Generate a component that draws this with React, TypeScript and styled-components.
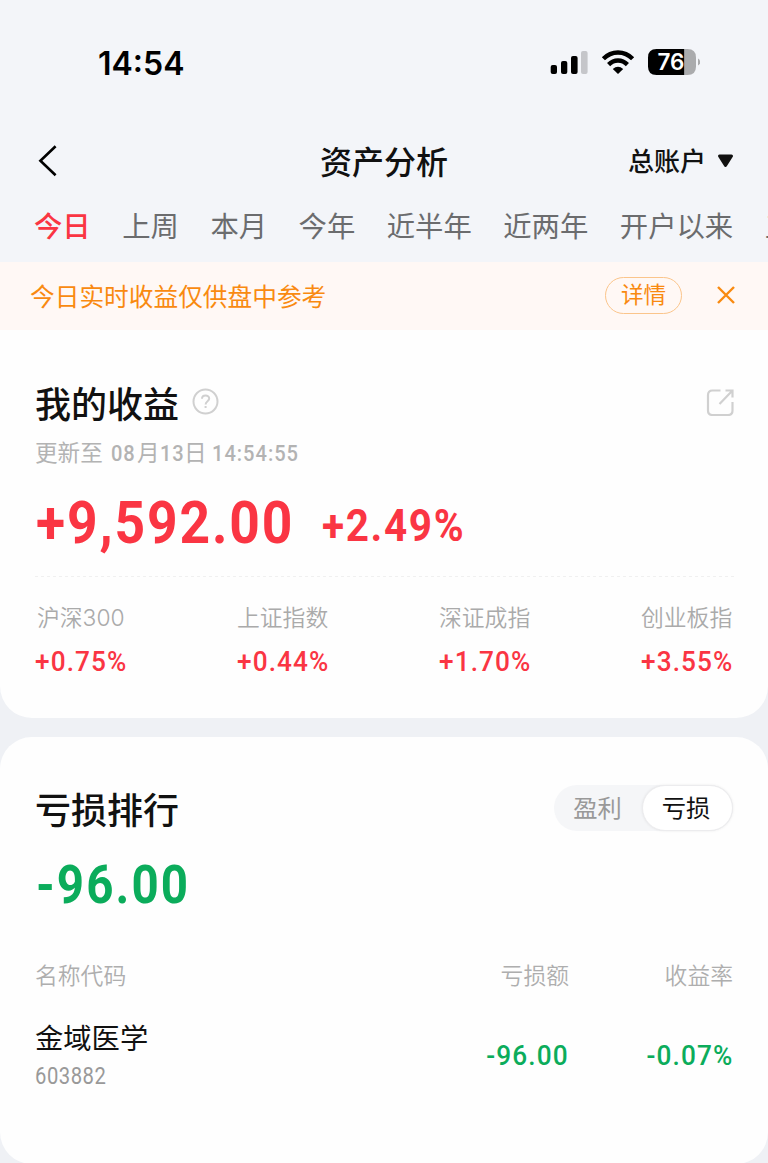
import React from "react";
import styled, { createGlobalStyle } from "styled-components";

const CJK = `"Noto Sans CJK SC", sans-serif`;

const Global = createGlobalStyle`
  * { box-sizing: border-box; }
  body { margin: 0; background: #f3f5f9; font-family: ${CJK}; color: #111; }
`;

const Page = styled.main`
  width: 768px;
  height: 1163px;
  overflow: hidden;
  background: #f3f5f9;
`;

const StatusBar = styled.header`
  height: 124px;
  padding: 44px 68px 0 98px;
  display: flex;
  justify-content: space-between;
  align-items: flex-start;
`;

const Time = styled.span`
  font: 600 32px/39px Inter, sans-serif;
  color: #000;
`;

const StatusIcons = styled.svg`
  width: 150px;
  height: 28px;
  margin-top: 4px;
`;

const NavBar = styled.nav`
  height: 74px;
  padding: 0 34px;
  display: grid;
  grid-template-columns: 1fr auto 1fr;
  align-items: center;
`;

const BackIcon = styled.svg`
  width: 20px;
  height: 32px;
  margin-left: 4px;
`;

const PageTitle = styled.h1`
  margin: 0;
  padding-bottom: 3px;
  font-size: 32px;
  line-height: 40px;
  font-weight: 500;
`;

const Account = styled.button`
  justify-self: end;
  display: flex;
  align-items: center;
  gap: 11px;
  padding: 0;
  border: 0;
  background: none;
  color: #111;
  font: 500 26px/32px ${CJK};
`;

const AccountName = styled.span`
  padding-bottom: 2px;
`;

const Tabs = styled.div`
  height: 64px;
  padding: 8px 0 0 34px;
  display: flex;
  gap: 31.5px;
  overflow: hidden;
`;

const Tab = styled.span<{ $active?: boolean }>`
  flex: none;
  font-size: 28.35px;
  line-height: 38px;
  font-weight: ${(p) => (p.$active ? 500 : 400)};
  color: ${(p) => (p.$active ? "#fa3543" : "#6b6c6e")};
`;

const Notice = styled.div`
  height: 68px;
  padding: 0 33px 2px 30px;
  display: flex;
  align-items: center;
  background: #fff8f5;
  color: #f98a10;
`;

const NoticeText = styled.span`
  flex: 1;
  padding-bottom: 1px;
  font-size: 24.7px;
  line-height: 36px;
`;

const DetailButton = styled.button`
  width: 77px;
  height: 37px;
  margin-right: 35px;
  padding: 0 0 2px;
  border: 1px solid #fbc58b;
  border-radius: 19px;
  background: none;
  color: #f98a10;
  font: 400 22.6px/32px ${CJK};
`;

const Cards = styled.div`
  display: flex;
  flex-direction: column;
  gap: 19px;
  background: #eff1f5;
`;

const ProfitCard = styled.section`
  height: 388px;
  padding: 47px 34px 0 35px;
  border-radius: 0 0 32px 32px;
  background: #fefefe;
`;

const LossCard = styled.section`
  height: 427px;
  padding: 46px 35px 0;
  border-radius: 32px;
  background: #fefefe;
`;

const HeadRow = styled.div`
  height: 50px;
  display: flex;
  align-items: center;
  justify-content: space-between;
`;

const HeadGroup = styled.div`
  display: flex;
  align-items: center;
  gap: 13px;
`;

const CardTitle = styled.h2`
  margin: 0;
  font-size: 36px;
  line-height: 48px;
  font-weight: 500;
`;

const HintIcon = styled.svg`
  width: 27px;
  height: 27px;
  margin-bottom: 1px;
`;

const Num = styled.span<{ $size: number; $weight?: number; $scale?: number; $track?: number; $end?: boolean }>`
  display: inline-block;
  white-space: nowrap;
  font-family: Roboto, sans-serif;
  font-size: ${(p) => p.$size}px;
  font-weight: ${(p) => p.$weight ?? 500};
  letter-spacing: ${(p) => p.$track ?? 0}px;
  margin-right: ${(p) => (p.$end ? -(p.$track ?? 0) : 0)}px;
  transform: scaleX(${(p) => p.$scale ?? 1});
  transform-origin: ${(p) => (p.$end ? "right" : "left")} center;
`;

const Updated = styled.div`
  height: 34px;
  margin-top: 8px;
  display: flex;
  font-size: 22.6px;
  line-height: 34px;
  color: #b3b3b3;
`;

const DatePart = styled.span<{ $width: number; $before?: number }>`
  flex: none;
  width: ${(p) => p.$width}px;
  margin-left: ${(p) => p.$before ?? 0}px;
`;

const Totals = styled.div`
  height: 107px;
  display: flex;
  align-items: flex-start;
  color: #fa3543;
`;

const TotalValue = styled.div`
  width: 287px;
  padding: 5px 0 0 1px;
  line-height: 98px;
`;

const TotalRate = styled.div`
  padding-top: 8px;
  line-height: 98px;
`;

const Divider = styled.div`
  height: 1px;
  background: repeating-linear-gradient(90deg, #f0f0f0 0 3px, transparent 3px 6px);
`;

const Indices = styled.div`
  display: flex;
  justify-content: space-between;
  padding-top: 24px;
`;

const IndexItem = styled.div`
  width: 93px;
  color: #fa3543;
`;

const IndexName = styled.div<{ $indent?: boolean }>`
  height: 34px;
  padding-left: ${(p) => (p.$indent ? 2 : 0)}px;
  font-family: Inter, ${CJK};
  font-weight: 350;
  font-size: 22.8px;
  line-height: 34px;
  color: #aaa;
  white-space: nowrap;
`;

const IndexValue = styled.div`
  margin-top: 8px;
  line-height: 37px;
`;

const Segment = styled.div`
  width: 179px;
  height: 46px;
  margin-bottom: 1px;
  display: flex;
  border-radius: 23px;
  background: #f5f6f8;
`;

const SegmentItem = styled.button<{ $on?: boolean }>`
  width: ${(p) => (p.$on ? 91 : 88)}px;
  padding: 0 ${(p) => (p.$on ? 3 : 1)}px 2px 0;
  border: ${(p) => (p.$on ? "1px solid #ececee" : "0")};
  border-radius: 23px;
  background: ${(p) => (p.$on ? "#fff" : "none")};
  box-shadow: ${(p) => (p.$on ? "0 0 3px rgba(0,0,0,.08)" : "none")};
  color: ${(p) => (p.$on ? "#111" : "#999")};
  font: 400 24.3px/40px ${CJK};
`;

const LossTotal = styled.div`
  height: 101px;
  padding-left: 1px;
  line-height: 103px;
  color: #0bac5b;
`;

const Table = styled.div`
  display: grid;
  grid-template-columns: 1fr 200px 164px;
`;

const HeadCell = styled.div<{ $end?: boolean }>`
  padding-top: 24px;
  height: 85px;
  font-size: 22.8px;
  line-height: 34px;
  font-weight: 350;
  color: #aeaeae;
  text-align: ${(p) => (p.$end ? "right" : "left")};
`;

const StockName = styled.div`
  font-size: 28.3px;
  line-height: 36px;
`;

const StockCode = styled.div`
  margin-top: 4px;
  line-height: 36px;
  color: #999;
`;

const ValueCell = styled.div`
  padding: 18px 1px 0 0;
  line-height: 38px;
  text-align: right;
  color: #0bac5b;
`;

const tabs = ["今日", "上周", "本月", "今年", "近半年", "近两年", "开户以来", "五年"];

const indices = [
  { name: "沪深300", value: "+0.75%" },
  { name: "上证指数", value: "+0.44%" },
  { name: "深证成指", value: "+1.70%" },
  { name: "创业板指", value: "+3.55%" },
];

const Status = () => (
  <StatusIcons viewBox="550 48 150 28">
    <rect x="550.7" y="65" width="6.3" height="9" rx="2" />
    <rect x="561" y="61" width="6.3" height="13" rx="2" />
    <rect x="571" y="56" width="6.6" height="18" rx="2" />
    <rect x="581" y="51" width="6.6" height="23" rx="2" fill="#c5c6ca" />
    <g fill="none" stroke="#000" strokeWidth="4.4">
      <path d="M603.4 58.8C611.5 50.4 624.5 50.4 632.6 58.8" />
      <path d="M608.6 64.6C614 59.2 622 59.2 627.4 64.6" />
    </g>
    <path d="M612.8 69Q618 64.4 623.2 69L618 74Z" />
    <path d="M656.5 49H684.5V75H656.5Q648 75 648 66.5V57.5Q648 49 656.5 49Z" />
    <path d="M684.5 49H687.5Q696 49 696 57.5V66.5Q696 75 687.5 75H684.5Z" fill="#aaabad" />
    <path d="M698 58.5Q700.2 60 700.2 62T698 65.5Z" fill="#aaabad" />
    <text x="657.5" y="70.3" fill="#fff" fontFamily="Inter" fontWeight="600" fontSize="22.5" letterSpacing="-0.1">76</text>
  </StatusIcons>
);

export default function App() {
  return (
    <Page>
      <Global />
      <StatusBar>
        <Time>14:54</Time>
        <Status />
      </StatusBar>
      <NavBar>
        <BackIcon viewBox="0 0 20 32" fill="none" stroke="#000" strokeWidth="2.6">
          <path d="M17.6 1.2L2.4 15.7L17.6 30.2" />
        </BackIcon>
        <PageTitle>资产分析</PageTitle>
        <Account>
          <AccountName>总账户</AccountName>
          <svg width="17" height="14" viewBox="0 0 17 14">
            <path d="M2.5 2H14.5L8.5 11.5Z" fill="#111" stroke="#111" strokeWidth="3" strokeLinejoin="round" />
          </svg>
        </Account>
      </NavBar>
      <Tabs>
        {tabs.map((t, i) => (
          <Tab key={t} $active={i === 0}>{t}</Tab>
        ))}
      </Tabs>
      <Notice>
        <NoticeText>今日实时收益仅供盘中参考</NoticeText>
        <DetailButton>详情</DetailButton>
        <svg width="18" height="18" viewBox="0 0 18 18" fill="none" stroke="#f98a10" strokeWidth="2.4">
          <path d="M1 1L17 17M17 1L1 17" />
        </svg>
      </Notice>
      <Cards>
        <ProfitCard>
          <HeadRow>
            <HeadGroup>
              <CardTitle>我的收益</CardTitle>
              <HintIcon viewBox="0 0 27 27" fill="none" stroke="#d0d0d0" strokeWidth="2">
                <circle cx="13.5" cy="13.5" r="12" />
                <path d="M10 10.8C10 6.4 17.2 6.4 17.2 10.6C17.2 13.2 13.6 13.2 13.6 16.4M13.6 18V20" />
              </HintIcon>
            </HeadGroup>
            <svg width="28" height="28" viewBox="0 0 28 28" fill="none" stroke="#d0d0d0" strokeWidth="2.2">
              <path d="M14.5 2.5H6.500Q2 2.5 2 7V22.5Q2 27 6.500 27H22Q26.500 27 26.500 22.5V14M19.500 2.5H26.500V9.500M26.500 2.5L13.500 16" />
            </svg>
          </HeadRow>
          <Updated>
            <DatePart $width={68}>更新至</DatePart>
            <DatePart $width={26} $before={8}><Num $size={22.6} $scale={0.89} $track={1}>08</Num></DatePart>
            <DatePart $width={23}>月</DatePart>
            <DatePart $width={24}><Num $size={22.6} $scale={0.89} $track={1}>13</Num></DatePart>
            <DatePart $width={22}>日</DatePart>
            <DatePart $width={90} $before={6}><Num $size={22.6} $scale={0.89} $track={1.1}>14:54:55</Num></DatePart>
          </Updated>
          <Totals>
            <TotalValue><Num $size={60} $weight={700} $scale={0.89} $track={2.1}>+9,592.00</Num></TotalValue>
            <TotalRate><Num $size={44} $weight={700} $scale={0.92} $track={1.8}>+2.49%</Num></TotalRate>
          </Totals>
          <Divider />
          <Indices>
            {indices.map((it, i) => (
              <IndexItem key={it.name}>
                <IndexName $indent={i === 0}>{it.name}</IndexName>
                <IndexValue><Num $size={28.2} $scale={0.93} $track={1.2}>{it.value}</Num></IndexValue>
              </IndexItem>
            ))}
          </Indices>
        </ProfitCard>
        <LossCard>
          <HeadRow>
            <CardTitle>亏损排行</CardTitle>
            <Segment>
              <SegmentItem>盈利</SegmentItem>
              <SegmentItem $on>亏损</SegmentItem>
            </Segment>
          </HeadRow>
          <LossTotal><Num $size={54} $weight={700} $scale={0.88} $track={2.4}>-96.00</Num></LossTotal>
          <Table>
            <HeadCell>名称代码</HeadCell>
            <HeadCell $end>亏损额</HeadCell>
            <HeadCell $end>收益率</HeadCell>
            <div>
              <StockName>金域医学</StockName>
              <StockCode><Num $size={23} $weight={450} $scale={0.88} $track={0.6}>603882</Num></StockCode>
            </div>
            <ValueCell><Num $size={28.2} $scale={0.93} $track={1.2} $end>-96.00</Num></ValueCell>
            <ValueCell><Num $size={28.2} $scale={0.93} $track={1.2} $end>-0.07%</Num></ValueCell>
          </Table>
        </LossCard>
      </Cards>
    </Page>
  );
}
